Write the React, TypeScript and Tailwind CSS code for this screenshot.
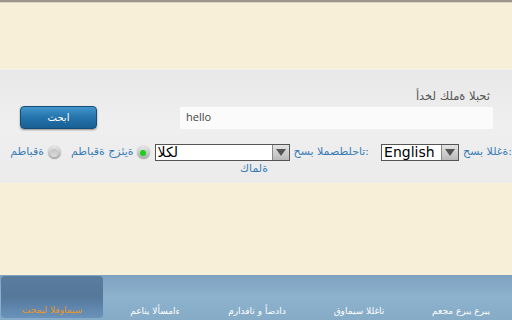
import React from "react";

// Arabic in the screenshot is drawn left-to-right, glyph order kept as typed
const ltrAr = "[unicode-bidi:bidi-override] [direction:ltr]";

const TABS = [
  { label: "تحميل القواميس", active: true },
  { label: "معاني الأسماء" },
  { label: "مرادفات و أضداد" },
  { label: "قواميس اللغات" },
  { label: "معجم عربي عربي" },
];

function Select({ value, width, ar }: { value: string; width: string; ar?: boolean }) {
  return (
    <div className={"flex h-[17px] items-stretch border border-[#555] bg-white shrink-0 " + width}>
      <span
        className={
          "flex-1 pl-[2px] text-[14px] leading-[15px] text-black font-['DejaVu_Sans',sans-serif] " +
          (ar ? ltrAr : "")
        }
      >
        {value}
      </span>
      <span className="flex w-[17px] items-center justify-center border-l border-[#888] bg-gradient-to-b from-[#e4e4e4] to-[#b9b9b9]">
        <svg width="10" height="7" viewBox="0 0 10 7">
          <path d="M0 0h10L5 7z" fill="#555" />
        </svg>
      </span>
    </div>
  );
}

function Radio({ on }: { on?: boolean }) {
  return (
    <span className="flex h-[13px] w-[13px] shrink-0 items-center justify-center rounded-full bg-gradient-to-b from-[#e9e9e9] to-[#a9a9a9] shadow-[0_0_1px_#777]">
      {on ? (
        <span className="h-[6px] w-[6px] rounded-full bg-[#1bd01b]" />
      ) : (
        <span className="h-[8px] w-[8px] rounded-full bg-gradient-to-b from-[#c4c4c4] to-[#dcdcdc]" />
      )}
    </span>
  );
}

export default function App() {
  return (
    <div className="flex h-[320px] w-[512px] flex-col overflow-hidden bg-[#f8efd9] font-['DejaVu_Sans',sans-serif]">
      <div className="h-[2px] bg-[#9b968b]" />
      <div className="h-[1px] bg-[#d8d2c4]" />
      <div className="h-[66px]" />

      {/* search panel */}
      <div className="flex h-[114px] flex-col border-t border-[#f2f2f2] bg-gradient-to-b from-[#e8e8e8] via-[#efefef] to-[#ebebeb]">
        <div className={"mt-[20px] mr-[22px] self-end text-[11.5px] leading-[13px] text-[#555] " + ltrAr}>
          أدخل كلمة البحث
        </div>

        <div className="mt-[3px] flex items-center">
          <button className="ml-[20px] flex h-[23px] w-[77px] items-center justify-center rounded-[4px] border border-[#184d78] bg-gradient-to-b from-[#4296cc] via-[#2473ab] to-[#195f93] text-[10px] text-white shadow-[0_1px_2px_rgba(0,0,0,0.4)]">
            ابحث
          </button>
          <div className="ml-auto mr-[19px] flex h-[22px] w-[313px] items-center bg-[#fbfbfb] pl-[6px] text-[11px] text-[#444] font-['Open_Sans',sans-serif]">
            hello
          </div>
        </div>

        <div className="mt-[15px] flex h-[17px] items-center justify-end text-[11px] text-[#3b7db7]">
          <span className={"shrink-0 whitespace-nowrap " + ltrAr}>مطابقة</span>
          <span className="ml-[4px]"><Radio /></span>
          <span className={"ml-[10px] shrink-0 whitespace-nowrap " + ltrAr}>مطابقة جزئية</span>
          <span className="ml-[3px]"><Radio on /></span>
          <span className="ml-[5px]"><Select value="الكل" width="w-[135px]" ar /></span>
          <span className={"ml-[4px] shrink-0 whitespace-nowrap " + ltrAr}>حسب المصطلحات:</span>
          <span className="ml-[12px]"><Select value="English" width="w-[78px]" /></span>
          <span className={"ml-[4px] shrink-0 whitespace-nowrap " + ltrAr}>حسب اللغة:</span>
        </div>

        <div className={"ml-[240px] mt-[2px] text-[11px] leading-[12px] text-[#3b7db7] " + ltrAr}>كاملة</div>
      </div>

      <div className="flex-1" />

      {/* bottom tabs */}
      <div className="flex h-[45px] bg-gradient-to-b from-[#7ea2c0] via-[#8db2cd] to-[#86abc7]">
        {TABS.map((t) => (
          <div
            key={t.label}
            className={
              "flex w-[102px] items-end justify-center text-[9px] " +
              (t.active
                ? "m-[1px] mb-[2px] rounded-[4px] bg-gradient-to-b from-[#5a7c9e] via-[#55789b] to-[#6a93bb] pb-[1px] text-[#e8962a]"
                : "pb-[2px] text-white")
            }
          >
            <span className={ltrAr}>{t.label}</span>
          </div>
        ))}
      </div>
    </div>
  );
}
